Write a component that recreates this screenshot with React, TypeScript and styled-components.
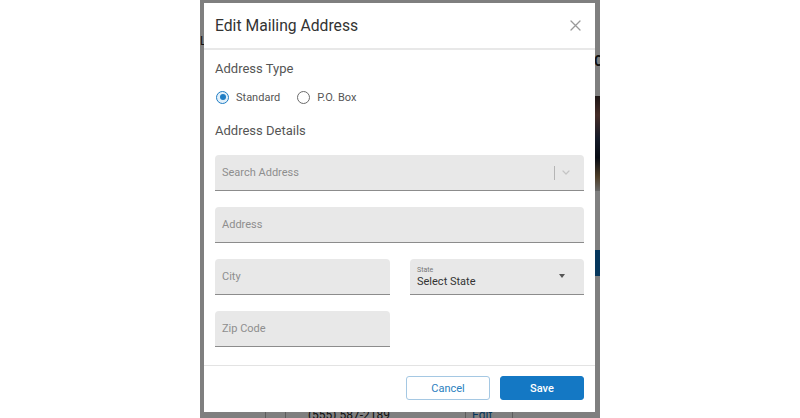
import React from 'react';
import styled, { createGlobalStyle } from 'styled-components';

const GlobalStyle = createGlobalStyle`
  html, body {
    margin: 0;
    padding: 0;
    background: #ffffff;
  }
  body {
    font-family: Roboto, "Liberation Sans", Arial, sans-serif;
    -webkit-font-smoothing: antialiased;
  }
  * { box-sizing: border-box; }
`;

/* ---------- frame ---------- */

const Screen = styled.div`
  width: 800px;
  height: 418px;
  display: flex;
  justify-content: center;
  background: #ffffff;
`;

const Stage = styled.div`
  position: relative;
  width: 400px;
  height: 418px;
  overflow: hidden;
  background: #ffffff;
`;

/* ---------- page behind the dialog ---------- */

const Page = styled.div`
  display: flex;
  flex-direction: column;
  height: 100%;
`;

const PageTop = styled.div`
  height: 409px;
  display: flex;
  justify-content: space-between;
  flex-shrink: 0;
`;

const EdgeMark = styled.div`
  width: 4px;
  padding-top: 34px;
  font-size: 12px;
  color: #222;
  line-height: 14px;
`;

const SidePanel = styled.div`
  width: 12px;
  display: flex;
  flex-direction: column;
  overflow: hidden;
`;

const SideHeading = styled.div`
  margin-top: 54px;
  padding-left: 6px;
  font-size: 14px;
  font-weight: 700;
  line-height: 14px;
  color: #222;
  white-space: nowrap;
`;

const SidePhoto = styled.div`
  margin-top: 28px;
  height: 95px;
  background: linear-gradient(
    180deg,
    #3a2a2a 0%,
    #8a5a50 20%,
    #2a3550 45%,
    #101828 65%,
    #9a7a50 85%,
    #cfcfcf 100%
  );
`;

const SideButton = styled.div`
  margin-top: 59px;
  height: 26px;
  background: #0d6fb8;
`;

const PageRow = styled.div`
  height: 16px;
  display: flex;
  align-items: flex-start;
  flex-shrink: 0;
`;

const RowCell = styled.div<{ $w: number; $pad: number }>`
  width: ${(p) => p.$w}px;
  height: 16px;
  border-right: 1px solid #bbb;
  font-size: 12px;
  line-height: 12px;
  color: #222;
  padding-left: ${(p) => p.$pad}px;
  white-space: nowrap;
`;

const RowLink = styled.span`
  color: #0d6fb8;
  text-decoration: underline;
`;

/* ---------- dialog ---------- */

const Overlay = styled.div`
  position: absolute;
  inset: 0;
  background: rgba(0, 0, 0, 0.5);
`;

const Dialog = styled.div`
  position: absolute;
  left: 4px;
  top: 3px;
  width: 391px;
  height: 409px;
  background: #ffffff;
  display: flex;
  flex-direction: column;
`;

const Header = styled.div`
  height: 47px;
  flex-shrink: 0;
  padding: 0 14px 0 11px;
  display: flex;
  align-items: center;
  justify-content: space-between;
  border-bottom: 2px solid #e8e8e8;
`;

const Title = styled.h2`
  margin: 0;
  font-size: 15.7px;
  font-weight: 400;
  color: #333333;
  line-height: 20px;
`;

const CloseButton = styled.button`
  width: 12px;
  height: 12px;
  padding: 0;
  border: 0;
  background: transparent;
  display: flex;
  align-items: center;
  justify-content: center;
  cursor: pointer;
`;

const Body = styled.div`
  flex: 1;
  padding: 11px 11px 18px;
  display: flex;
  flex-direction: column;
`;

const SectionLabel = styled.div<{ $gap: number }>`
  font-size: 13px;
  line-height: 16px;
  color: #555555;
  margin-bottom: ${(p) => p.$gap}px;
`;

const RadioGroup = styled.div`
  display: flex;
  align-items: center;
  gap: 17px;
  height: 16px;
  margin-bottom: 18px;
  padding-left: 1px;
`;

const RadioOption = styled.label`
  display: inline-flex;
  align-items: center;
  gap: 7px;
  font-size: 11px;
  color: #555555;
  cursor: pointer;
`;

const RadioCircle = styled.span<{ $checked?: boolean }>`
  width: 13px;
  height: 13px;
  border-radius: 50%;
  border: 1.5px solid ${(p) => (p.$checked ? '#1f7dc4' : '#6b6b6b')};
  background: ${(p) => (p.$checked ? '#e2f0fa' : '#ffffff')};
  display: flex;
  align-items: center;
  justify-content: center;

  &::after {
    content: '';
    width: 6px;
    height: 6px;
    border-radius: 50%;
    background: #1f7dc4;
    display: ${(p) => (p.$checked ? 'block' : 'none')};
  }
`;

const Fields = styled.div`
  display: flex;
  flex-direction: column;
  gap: 16px;
`;

const FieldRow = styled.div`
  display: grid;
  grid-template-columns: 175px 174px;
  column-gap: 20px;
`;

const FieldBox = styled.div`
  height: 36px;
  background: #e8e8e8;
  border-radius: 4px 4px 0 0;
  border-bottom: 1.5px solid #8c8c8c;
  padding: 0 14px 0 7px;
  display: flex;
  align-items: center;
  justify-content: space-between;
`;

const Placeholder = styled.span`
  font-size: 11px;
  color: #8e8e8e;
`;

const SearchAdornment = styled.div`
  display: flex;
  align-items: center;
  gap: 7px;
`;

const Divider = styled.span`
  width: 1px;
  height: 14px;
  background: #b5b5b5;
`;

const SelectBox = styled(FieldBox)`
  padding-right: 19px;
`;

const SelectText = styled.div`
  display: flex;
  flex-direction: column;
  padding-top: 2px;
`;

const SelectLabel = styled.span`
  font-size: 7px;
  line-height: 9px;
  color: #777777;
`;

const SelectValue = styled.span`
  font-size: 11px;
  line-height: 14px;
  color: #333333;
`;

const Caret = styled.span`
  width: 0;
  height: 0;
  border-left: 3.5px solid transparent;
  border-right: 3.5px solid transparent;
  border-top: 4px solid #555555;
  margin-top: -2px;
`;

const Footer = styled.div`
  flex-shrink: 0;
  border-top: 1px solid #e3e3e3;
  padding: 10px 11px 12px;
  display: flex;
  justify-content: flex-end;
  gap: 10px;
`;

const Button = styled.button<{ $primary?: boolean }>`
  width: 84px;
  height: 24px;
  border-radius: 3px;
  font-family: inherit;
  font-size: 11px;
  cursor: pointer;
  border: 1px solid ${(p) => (p.$primary ? '#1478c4' : '#a5c8e3')};
  background: ${(p) => (p.$primary ? '#1478c4' : '#ffffff')};
  color: ${(p) => (p.$primary ? '#ffffff' : '#2b7fc0')};
  font-weight: ${(p) => (p.$primary ? 500 : 400)};
`;

/* ---------- small drawings ---------- */

const CloseIcon = () => (
  <svg width="11" height="11" viewBox="0 0 11 11" fill="none">
    <path d="M1 1 L10 10 M10 1 L1 10" stroke="#9a9a9a" strokeWidth="1.3" strokeLinecap="round" />
  </svg>
);

const Chevron = () => (
  <svg width="8" height="5" viewBox="0 0 8 5" fill="none">
    <path d="M1 1 L4 4 L7 1" stroke="#c4c4c4" strokeWidth="1.2" strokeLinecap="round" strokeLinejoin="round" />
  </svg>
);

export default function App() {
  return (
    <>
      <GlobalStyle />
      <Screen>
        <Stage>
          <Page>
            <PageTop>
              <EdgeMark>L</EdgeMark>
              <SidePanel>
                <SideHeading>Co</SideHeading>
                <SidePhoto />
                <SideButton />
              </SidePanel>
            </PageTop>
            <PageRow>
              <RowCell $w={66} $pad={0} />
              <RowCell $w={20} $pad={0} />
              <RowCell $w={180} $pad={22}>(555) 587-2189</RowCell>
              <RowCell $w={47} $pad={6}>
                <RowLink>Edit</RowLink>
              </RowCell>
            </PageRow>
          </Page>

          <Overlay />

          <Dialog role="dialog" aria-label="Edit Mailing Address">
            <Header>
              <Title>Edit Mailing Address</Title>
              <CloseButton aria-label="Close">
                <CloseIcon />
              </CloseButton>
            </Header>

            <Body>
              <SectionLabel $gap={12}>Address Type</SectionLabel>
              <RadioGroup>
                <RadioOption>
                  <RadioCircle $checked />
                  Standard
                </RadioOption>
                <RadioOption>
                  <RadioCircle />
                  P.O. Box
                </RadioOption>
              </RadioGroup>

              <SectionLabel $gap={16}>Address Details</SectionLabel>
              <Fields>
                <FieldBox>
                  <Placeholder>Search Address</Placeholder>
                  <SearchAdornment>
                    <Divider />
                    <Chevron />
                  </SearchAdornment>
                </FieldBox>
                <FieldBox>
                  <Placeholder>Address</Placeholder>
                </FieldBox>
                <FieldRow>
                  <FieldBox>
                    <Placeholder>City</Placeholder>
                  </FieldBox>
                  <SelectBox>
                    <SelectText>
                      <SelectLabel>State</SelectLabel>
                      <SelectValue>Select State</SelectValue>
                    </SelectText>
                    <Caret />
                  </SelectBox>
                </FieldRow>
                <FieldRow>
                  <FieldBox>
                    <Placeholder>Zip Code</Placeholder>
                  </FieldBox>
                </FieldRow>
              </Fields>
            </Body>

            <Footer>
              <Button>Cancel</Button>
              <Button $primary>Save</Button>
            </Footer>
          </Dialog>
        </Stage>
      </Screen>
    </>
  );
}
